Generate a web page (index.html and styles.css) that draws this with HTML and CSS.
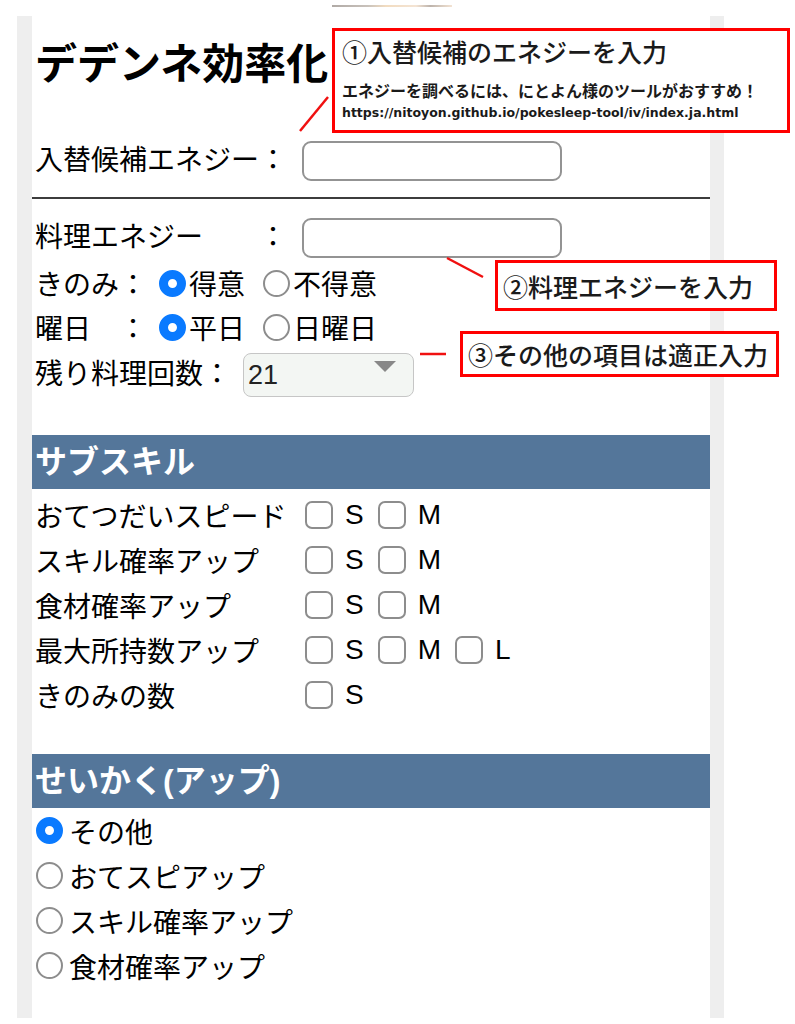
FILE: index.html
```html
<!DOCTYPE html>
<html lang="ja">

<head>
    <meta charset="UTF-8">
    <meta name="viewport" content="width=device-width, initial-scale=1.0">
    <title>デデンネ効率化</title>
    <link rel="stylesheet" href="styles.css">
</head>

<body>
    <div class="page">
        <h1 class="title">デデンネ効率化</h1>

        <div class="field fieldFirst">
            <span class="label">入替候補エネジー：</span>
            <input type="text" class="textBox">
        </div>
        <hr class="divider">
        <div class="field">
            <span class="label">料理エネジー　　：</span>
            <input type="text" class="textBox">
        </div>

        <div class="choice choiceFirst">
            <span>きのみ：</span>
            <label class="opt"><input type="radio" class="dot" name="berry" checked>得意</label>
            <label class="opt"><input type="radio" class="dot" name="berry">不得意</label>
        </div>
        <div class="choice">
            <span>曜日　：</span>
            <label class="opt"><input type="radio" class="dot" name="day" checked>平日</label>
            <label class="opt"><input type="radio" class="dot" name="day">日曜日</label>
        </div>
        <div class="field countRow">
            <span>残り料理回数：</span>
            <div class="selectBox">
                <select>
                    <option>21</option>
                </select>
            </div>
        </div>

        <h2 class="bar">サブスキル</h2>
        <div class="skills">
            <div class="skill">
                <span class="skillName">おてつだいスピード</span>
                <label class="chk"><input type="checkbox">S</label>
                <label class="chk"><input type="checkbox">M</label>
            </div>
            <div class="skill">
                <span class="skillName">スキル確率アップ</span>
                <label class="chk"><input type="checkbox">S</label>
                <label class="chk"><input type="checkbox">M</label>
            </div>
            <div class="skill">
                <span class="skillName">食材確率アップ</span>
                <label class="chk"><input type="checkbox">S</label>
                <label class="chk"><input type="checkbox">M</label>
            </div>
            <div class="skill">
                <span class="skillName">最大所持数アップ</span>
                <label class="chk"><input type="checkbox">S</label>
                <label class="chk"><input type="checkbox">M</label>
                <label class="chk"><input type="checkbox">L</label>
            </div>
            <div class="skill">
                <span class="skillName">きのみの数</span>
                <label class="chk"><input type="checkbox">S</label>
            </div>
        </div>

        <h2 class="bar barSecond">せいかく(アップ)</h2>
        <label class="nature"><input type="radio" class="dot" name="nature" checked>その他</label>
        <label class="nature"><input type="radio" class="dot" name="nature">おてスピアップ</label>
        <label class="nature"><input type="radio" class="dot" name="nature">スキル確率アップ</label>
        <label class="nature"><input type="radio" class="dot" name="nature">食材確率アップ</label>
    </div>

    <div class="topStrip"></div>

    <!-- annotations -->
    <svg class="leaders" width="795" height="1024" viewBox="0 0 795 1024">
        <line x1="300" y1="131" x2="328" y2="97" />
        <line x1="447" y1="258" x2="483" y2="277" />
        <line x1="420" y1="354" x2="446" y2="354" />
    </svg>
    <div class="note note1">
        <div class="noteHead">①入替候補のエネジーを入力</div>
        <div class="noteSub">エネジーを調べるには、にとよん様のツールがおすすめ！</div>
        <div class="noteUrl">https://nitoyon.github.io/pokesleep-tool/iv/index.ja.html</div>
    </div>
    <div class="note note2">②料理エネジーを入力</div>
    <div class="note note3">③その他の項目は適正入力</div>
</body>

</html>
```

FILE: styles.css
```css
* {
    margin: 0;
    padding: 0;
    box-sizing: border-box;
}

body {
    position: relative;
    height: 1024px;
    overflow: hidden;
    background-color: #fff;
    color: #000;
    font-family: "Liberation Sans", "Noto Sans CJK JP", sans-serif;
}

.page {
    width: 707px;
    margin: 16px 0 0 17px;
    padding: 24px 0 30px;
    border-left: 15px solid #eee;
    border-right: 14px solid #eee;
}

.title {
    padding-left: 3px;
    font-size: 42px;
    line-height: 50px;
    font-weight: bold;
}

.field {
    display: flex;
    align-items: center;
    padding-left: 3px;
    font-size: 28px;
    line-height: 40px;
}

.fieldFirst {
    margin-top: 51px;
}

.label {
    width: 252px;
}

.textBox {
    width: 260px;
    height: 40px;
    margin-left: 15px;
    border: 2px solid #939393;
    border-radius: 9px;
    background-color: #fff;
}

.divider {
    border: 0;
    border-top: 2px solid #3c3c3c;
    margin: 16px 0 19px;
}

.choice {
    display: flex;
    align-items: center;
    height: 44px;
    padding-left: 3px;
    font-size: 28px;
}

.choiceFirst {
    margin-top: 3px;
}

.opt {
    display: flex;
    align-items: center;
}

.dot {
    appearance: none;
    flex: none;
    width: 27px;
    height: 27px;
    border: 2px solid #8d8d8d;
    border-radius: 50%;
    background-color: #fff;
}

.dot:checked {
    border: 9px solid #0a7aff;
}

.opt .dot {
    margin: 0 3px 0 12px;
}

.opt+.opt .dot {
    margin-left: 18px;
}

.countRow {
    margin-top: 4px;
    height: 44px;
}

.selectBox {
    position: relative;
    width: 171px;
    height: 44px;
    margin-left: 12px;
}

.selectBox select {
    appearance: none;
    width: 100%;
    height: 100%;
    padding-left: 4px;
    border: 1.5px solid #c6c6c6;
    border-radius: 8px;
    background-color: #f3f6f3;
    color: #222;
    font-family: "Liberation Sans", sans-serif;
    font-size: 27px;
}

.selectBox::after {
    content: '';
    position: absolute;
    left: 131px;
    top: 8px;
    border-left: 11px solid transparent;
    border-right: 11px solid transparent;
    border-top: 11px solid #888;
}

.bar {
    height: 54px;
    margin-top: 38px;
    padding-left: 3px;
    background-color: #54769a;
    color: #fff;
    font-size: 32px;
    line-height: 54px;
    font-weight: bold;
}

.barSecond {
    margin-top: 37px;
}

.skills {
    margin-top: 3px;
}

.skill {
    display: flex;
    align-items: center;
    height: 45px;
    padding-left: 3px;
    font-size: 28px;
}

.skillName {
    width: 270px;
}

.chk {
    display: flex;
    align-items: center;
    margin-right: 14px;
}

.chk input {
    appearance: none;
    flex: none;
    width: 28px;
    height: 28px;
    margin-right: 12px;
    border: 2px solid #8d8d8d;
    border-radius: 7px;
    background-color: #fff;
}

.nature {
    display: flex;
    align-items: center;
    height: 45px;
    padding-left: 4px;
    font-size: 28px;
}

.nature .dot {
    margin-right: 6px;
}

.topStrip {
    position: absolute;
    left: 332px;
    top: 5px;
    width: 120px;
    height: 2px;
    background-image: linear-gradient(90deg, #b0aaa6 0%, #c9c2bb 30%, #f2dcc0 45%, #f4e4d4 70%, #bdb3ab 82%, #f3e3d3 100%);
}

.leaders {
    position: absolute;
    left: 0;
    top: 0;
    pointer-events: none;
}

.leaders line {
    stroke: #f01010;
    stroke-width: 2.5;
}

.note {
    position: absolute;
    border: 3px solid #f00;
    background-color: #fff;
    color: #1a1a1a;
    font-family: "Noto Sans CJK JP", sans-serif;
    white-space: nowrap;
}

.note1 {
    left: 332px;
    top: 28px;
    width: 458px;
    height: 105px;
    padding: 4px 0 0 7px;
}

.noteHead {
    font-size: 25px;
    line-height: 32px;
    font-weight: 500;
}

.noteSub {
    margin-top: 11px;
    font-size: 16px;
    line-height: 24px;
    font-weight: bold;
}

.noteUrl {
    margin-top: 1px;
    font-family: "DejaVu Sans", sans-serif;
    font-size: 12.5px;
    line-height: 20px;
    font-weight: bold;
}

.note2 {
    left: 495px;
    top: 260px;
    width: 282px;
    height: 51px;
    padding: 2px 0 0 5px;
    font-size: 25px;
    line-height: 43px;
    font-weight: 500;
}

.note3 {
    left: 460px;
    top: 331px;
    width: 319px;
    height: 46px;
    padding-left: 5px;
    font-size: 25px;
    line-height: 40px;
    font-weight: 500;
}
```
